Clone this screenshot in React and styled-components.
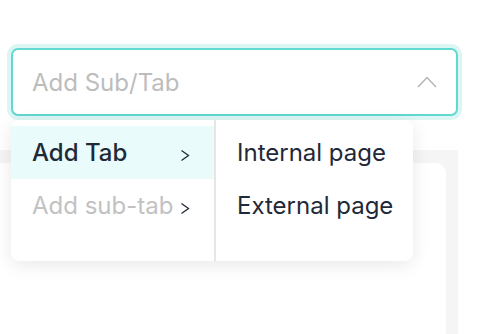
import React, { useState } from 'react';
import styled, { createGlobalStyle } from 'styled-components';

const GlobalStyle = createGlobalStyle`
  html, body {
    margin: 0;
    padding: 0;
    background: #fff;
    font-family: Inter, "Noto Sans", sans-serif;
    overflow: hidden;
  }
`;

const Page = styled.div`
  width: 486px;
  height: 334px;
  padding-top: 48px;
  box-sizing: border-box;
  display: flex;
  flex-direction: column;
`;

const SelectWrap = styled.div`
  position: relative;
  margin-left: 11px;
  width: 447px;
  z-index: 2;
`;

const SelectBox = styled.div`
  height: 68px;
  box-sizing: border-box;
  border: 2px solid #62d8d0;
  border-radius: 7px;
  box-shadow: 0 0 0 4px #dcf6f4;
  background: #fff;
  display: flex;
  align-items: center;
  justify-content: space-between;
  padding: 0 19px 0 19px;
  cursor: pointer;
`;

const Placeholder = styled.span`
  font-size: 24px;
  color: #bdbdbd;
`;

const Menu = styled.div`
  position: absolute;
  top: 72px;
  left: 0;
  width: 402px;
  height: 141px;
  background: #fff;
  border-radius: 8px;
  box-shadow: 0 4px 18px rgba(0, 0, 0, 0.09);
  display: grid;
  grid-template-columns: 203px 2px 1fr;
  overflow: hidden;
`;

const Column = styled.ul`
  list-style: none;
  margin: 0;
  padding: 6px 0 0;
  min-width: 0;
`;

const Divider = styled.div`
  background: #e6e6e6;
`;

const Item = styled.li`
  height: 53px;
  display: flex;
  align-items: center;
  justify-content: space-between;
  gap: 6px;
  padding: 0 24px 0 21px;
  font-size: 24px;
  white-space: nowrap;
  font-weight: ${p => (p.$active ? 500 : 400)};
  color: ${p => (p.$disabled ? '#c2c2c2' : '#1f2937')};
  background: ${p => (p.$active ? '#e9fbfa' : 'transparent')};
  cursor: ${p => (p.$disabled ? 'default' : 'pointer')};
`;

const Chevron = styled.svg`
  flex: none;
  margin-top: 5px;
`;

const Panel = styled.div`
  margin-top: 34px;
  width: 458px;
  flex: 1;
  background: #f5f5f5;
  padding-top: 13px;
  display: flex;
`;

const Card = styled.div`
  width: 446px;
  background: #fff;
  border-top-right-radius: 10px;
`;

const Arrow = () => (
  <Chevron width="10" height="13" viewBox="0 0 10 13">
    <polyline points="1.5,1.5 8.5,6.5 1.5,11.5" fill="none" stroke="#1f2937" strokeWidth="1.3" />
  </Chevron>
);

export default function App() {
  const [open] = useState(true);
  return (
    <Page>
      <GlobalStyle />
      <SelectWrap>
        <SelectBox>
          <Placeholder>Add Sub/Tab</Placeholder>
          <svg width="20" height="12" viewBox="0 0 20 12">
            <polyline points="1,11 10,1.5 19,11" fill="none" stroke="#b5b5b5" strokeWidth="1.5" />
          </svg>
        </SelectBox>
        {open && (
          <Menu>
            <Column>
              <Item $active>
                Add Tab
                <Arrow />
              </Item>
              <Item $disabled>
                Add sub-tab
                <Arrow />
              </Item>
            </Column>
            <Divider />
            <Column>
              <Item>Internal page</Item>
              <Item>External page</Item>
            </Column>
          </Menu>
        )}
      </SelectWrap>
      <Panel>
        <Card />
      </Panel>
    </Page>
  );
}
